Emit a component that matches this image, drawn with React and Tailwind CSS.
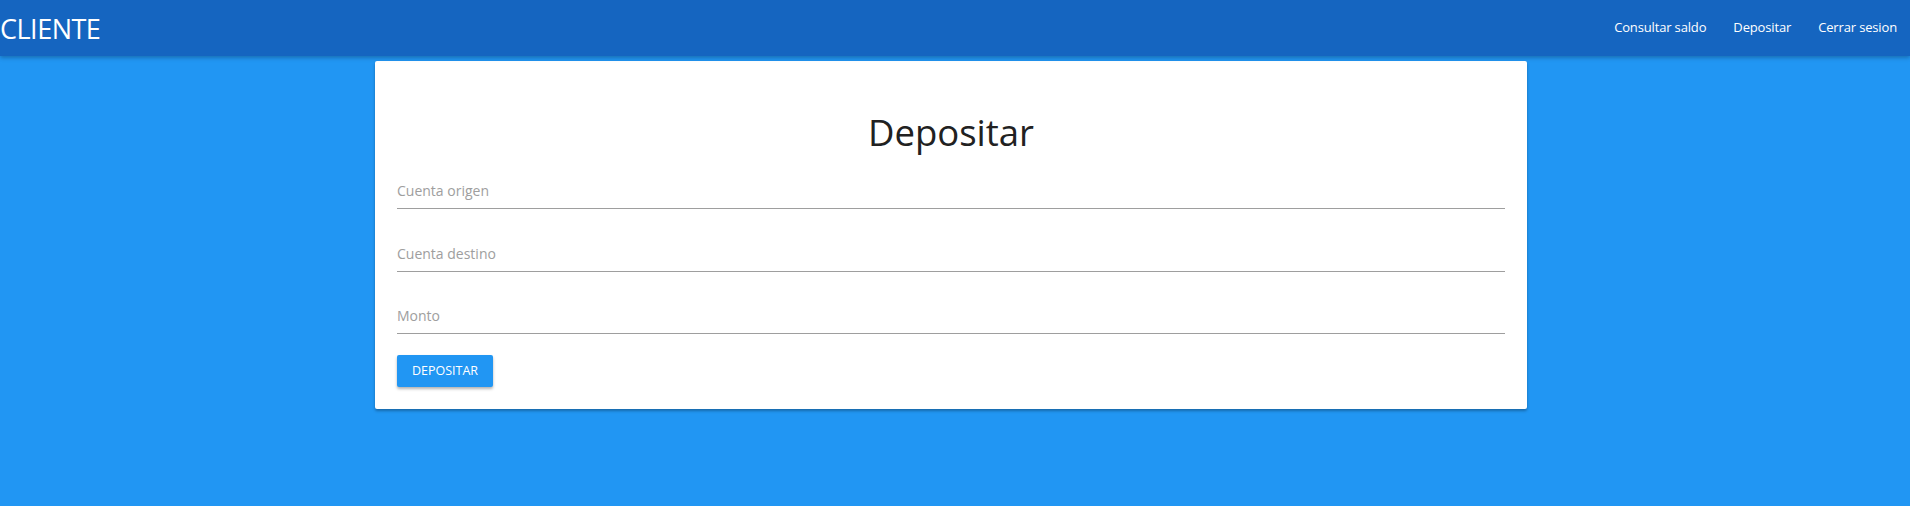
export default function App() {
  const fields = ["Cuenta origen", "Cuenta destino", "Monto"];
  return (
    <div className="min-h-[506px] bg-[#2196F3]" style={{ fontFamily: '"Open Sans", "Noto Sans", sans-serif' }}>
      <header className="relative z-10 flex h-[56px] items-center justify-between bg-[#1565C0] shadow-[0_2px_4px_rgba(0,0,0,0.25)]">
        <div className="text-[27px] leading-none text-white tracking-[-0.5px]">CLIENTE</div>
        <nav className="flex items-center gap-[27px] pr-[13px] text-[13px] tracking-[-0.15px] text-white">
          <span>Consultar saldo</span>
          <span>Depositar</span>
          <span>Cerrar sesion</span>
        </nav>
      </header>
      <div className="pl-[375px] pt-[5px]">
        <div className="w-[1152px] h-[348px] bg-white rounded-[2px] shadow-[0_2px_3px_rgba(0,0,0,0.3)] px-[22px] pt-[47px]">
          <h1 className="text-center text-[36.5px] leading-[48px] text-[#212121] font-normal">Depositar</h1>
          <div className="mt-[21px] flex flex-col gap-[30.5px]">
            {fields.map((f) => (
              <div key={f} className="h-[32px] pb-[4px] border-b border-[#9e9e9e] flex items-center">
                <span className="text-[14px] text-[#9e9e9e]">{f}</span>
              </div>
            ))}
          </div>
          <button className="mt-[21px] w-[96px] h-[32px] rounded-[2px] bg-[#2196F3] text-white text-[12.5px] shadow-[0_2px_3px_rgba(0,0,0,0.3)]">
            DEPOSITAR
          </button>
        </div>
      </div>
    </div>
  );
}
